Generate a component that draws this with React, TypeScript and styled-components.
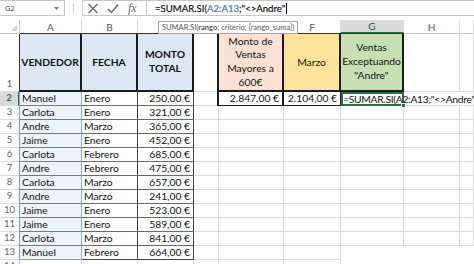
import styled, { createGlobalStyle } from "styled-components";

const GlobalStyle = createGlobalStyle`
  body {
    margin: 0;
    background: #fff;
    font-family: Lato, "Liberation Sans", sans-serif;
  }
`;

const GRID = "#dadada";
const INK = "#1c1c1c";
const REF = "#6d9eeb";
const ACTIVE = "#217346";

const Page = styled.div`
  position: relative;
  width: 474px;
  height: 264px;
  overflow: hidden;
  background: #fff;
`;

const FormulaBar = styled.div`
  display: flex;
  align-items: flex-start;
  height: 20px;
`;

const NameBox = styled.div`
  box-sizing: border-box;
  width: 65px;
  height: 16px;
  border: 1px solid #c6c6c6;
  border-left: none;
  display: flex;
  align-items: center;
  justify-content: space-between;
  padding: 0 5px 0 5px;
  font-family: "Open Sans", sans-serif;
  font-size: 7.5px;
  color: #333;
`;

const Grip = styled.div`
  width: 17px;
  height: 16px;
  display: flex;
  align-items: center;
  justify-content: center;

  &::after {
    content: "";
    height: 9px;
    border-left: 1px dotted #b5b5b5;
  }
`;

const FxBox = styled.div`
  box-sizing: border-box;
  width: 65px;
  height: 16px;
  border: 1px solid #c6c6c6;
  display: flex;
  align-items: center;
  padding-left: 4px;
  gap: 8px;
`;

const FxText = styled.span`
  font-family: "Liberation Serif", serif;
  font-style: italic;
  font-size: 12px;
  color: #666;
  line-height: 12px;
  margin-left: 1px;
`;

const Formula = styled.div`
  box-sizing: border-box;
  flex: 1;
  height: 16px;
  border: 1px solid #c6c6c6;
  border-left: none;
  border-right: none;
  display: flex;
  align-items: center;
  padding-left: 8px;
  font-size: 9.6px;
  color: #111;
  white-space: nowrap;
  -webkit-text-stroke: 0.2px #111;
`;

const RefText = styled.span`
  color: #3c78d8;
  -webkit-text-stroke: 0.2px #3c78d8;
`;

const Caret = styled.span`
  display: inline-block;
  width: 1px;
  height: 11px;
  background: #000;
  margin-left: 1px;
`;

const Hint = styled.div`
  position: absolute;
  left: 158px;
  top: 21px;
  height: 13px;
  box-sizing: border-box;
  border: 1px solid #a6a6a6;
  background: #fff;
  padding: 0 3px;
  font-size: 7.5px;
  line-height: 11px;
  color: #555;
  white-space: nowrap;
  z-index: 2;
`;

const Sheet = styled.div`
  display: grid;
  grid-template-columns: 20px 62px 56px 56px 25px 65px 57px 63px 56px 14px;
  grid-template-rows: 14px 58px repeat(13, 14px);
`;

const Corner = styled.div`
  box-sizing: border-box;
  border-right: 1px solid #c8c8c8;
  border-bottom: 1px solid #c8c8c8;
  position: relative;

  &::after {
    content: "";
    position: absolute;
    right: 2px;
    bottom: 2px;
    border-left: 6px solid transparent;
    border-bottom: 6px solid #d0d0d0;
  }
`;

const ColHead = styled.div<{ $active?: boolean }>`
  box-sizing: border-box;
  display: flex;
  align-items: center;
  justify-content: center;
  background: ${(p) => (p.$active ? "#dadada" : "#fff")};
  border-right: 1px solid ${GRID};
  border-bottom: ${(p) => (p.$active ? `2px solid ${ACTIVE}` : "1px solid #c8c8c8")};
  font-size: 10px;
  color: ${(p) => (p.$active ? "#1f5a38" : "#555")};
`;

const RowHead = styled.div<{ $active?: boolean }>`
  box-sizing: border-box;
  display: flex;
  align-items: flex-end;
  justify-content: center;
  padding-bottom: 1px;
  background: ${(p) => (p.$active ? "#dadada" : "#fff")};
  border-right: ${(p) => (p.$active ? `2px solid ${ACTIVE}` : "1px solid #c8c8c8")};
  border-bottom: 1px solid ${GRID};
  font-size: 9.5px;
  line-height: 12px;
  font-weight: ${(p) => (p.$active ? 700 : 400)};
  color: ${(p) => (p.$active ? ACTIVE : "#666")};
`;

type Align = "left" | "center" | "right";

type CellProps = {
  $fill?: string;
  $align?: Align;
  $bold?: boolean;
  $wrap?: boolean;
  $right?: string;
  $bottom?: string;
  $edge?: string;
  $active?: boolean;
};

const Cell = styled.div<CellProps>`
  box-sizing: border-box;
  position: relative;
  display: flex;
  align-items: center;
  justify-content: ${(p) =>
    p.$align === "right" ? "flex-end" : p.$align === "center" ? "center" : "flex-start"};
  padding: 0 ${(p) => (p.$align === "right" ? "3px" : "2px")};
  background: ${(p) => p.$fill ?? "transparent"};
  border-right: ${(p) => p.$right ?? `1px solid ${GRID}`};
  border-bottom: ${(p) => p.$bottom ?? `1px solid ${GRID}`};
  box-shadow: ${(p) => (p.$active ? `inset 0 0 0 2px ${ACTIVE}` : p.$edge ?? "none")};
  font-size: 10.3px;
  font-weight: ${(p) => (p.$bold ? 700 : 400)};
  line-height: ${(p) => (p.$wrap ? "13.7px" : "13px")};
  text-align: ${(p) => p.$align ?? "left"};
  white-space: ${(p) => (p.$wrap ? "pre-line" : "nowrap")};
  color: #111;

  ${(p) =>
    p.$active &&
    `
    &::before {
      content: "";
      position: absolute;
      right: -2px;
      bottom: -2px;
      width: 3px;
      height: 3px;
      background: ${ACTIVE};
      border: 1px solid #fff;
      z-index: -1;
    }
  `}
`;

// cell in edit mode: the formula spills over H and I
const EditCell = styled(Cell)`
  letter-spacing: -0.3px;
  z-index: 1;
`;

const line = (w: number, c = INK) => `${w}px solid ${c}`;

const BLUE = "#dde8f5";
const PINK = "#fbe2d5";
const YELLOW = "#ffe39a";
const GREEN = "#c6e0b4";
const TINT = "#eef3fb";

const LETTERS = ["A", "B", "C", "D", "E", "F", "G", "H", ""];

const DATA = [
  ["Manuel", "Enero", "250,00 €"],
  ["Carlota", "Enero", "321,00 €"],
  ["Andre", "Marzo", "365,00 €"],
  ["Jaime", "Enero", "452,00 €"],
  ["Carlota", "Febrero", "685,00 €"],
  ["Andre", "Febrero", "475,00 €"],
  ["Carlota", "Marzo", "657,00 €"],
  ["Andre", "Marzo", "241,00 €"],
  ["Jaime", "Enero", "523,00 €"],
  ["Jaime", "Enero", "589,00 €"],
  ["Carlota", "Marzo", "841,00 €"],
  ["Manuel", "Febrero", "664,00 €"],
];

const FORMULA = '=SUMAR.SI(A2:A13;"<>Andre"';

const XIcon = () => (
  <svg width="12" height="11" viewBox="0 0 12 11">
    <path d="M1.5 1 L10.5 10 M10.5 1 L1.5 10" stroke="#666" strokeWidth="1.3" fill="none" />
  </svg>
);

const CheckIcon = () => (
  <svg width="12" height="11" viewBox="0 0 12 11">
    <path d="M1 6 L4.5 9.5 L11 1.5" stroke="#666" strokeWidth="1.5" fill="none" />
  </svg>
);

const DropArrow = () => (
  <svg width="5" height="3" viewBox="0 0 5 3">
    <path d="M0 0 H5 L2.5 3 Z" fill="#777" />
  </svg>
);

const topEdge = "0 -1px 0 #333";

const HeaderRow = () => (
  <>
    <RowHead>1</RowHead>
    <Cell $fill={BLUE} $bold $align="center" $right={line(2)} $bottom={line(2)} $edge={`${topEdge}, -1px 0 0 #333`}>
      VENDEDOR
    </Cell>
    <Cell $fill={BLUE} $bold $align="center" $right={line(2)} $bottom={line(2)} $edge={topEdge}>
      FECHA
    </Cell>
    <Cell $fill={BLUE} $bold $wrap $align="center" $right={line(2)} $bottom={line(2)} $edge={topEdge}>
      {"MONTO\nTOTAL"}
    </Cell>
    <Cell />
    <Cell $fill={PINK} $wrap $align="center" $right={line(2)} $bottom={line(2)} $edge={`${topEdge}, -2px 0 0 ${INK}, -2px -1px 0 #333`}>
      {"Monto de\nVentas\nMayores a\n600€"}
    </Cell>
    <Cell $fill={YELLOW} $align="center" $right={line(2)} $bottom={line(2)} $edge={topEdge}>
      Marzo
    </Cell>
    <Cell $fill={GREEN} $wrap $align="center" $right={line(2)} $bottom={line(2)} $edge={topEdge}>
      {'Ventas\nExceptuando\n"Andre"'}
    </Cell>
    <Cell />
    <Cell />
  </>
);

const DataRow = ({ n, row }: { n: number; row?: string[] }) => {
  const last = n === 13;
  const blankRight = n >= 13;
  const fade = blankRight ? "none" : undefined;
  return (
    <>
      <RowHead $active={n === 2}>{n}</RowHead>
      {row ? (
        <>
          <Cell $fill={TINT} $right={line(1, "#8fb0dc")} $bottom={line(1, last ? REF : "#7a7a7a")} $edge={`-1px 0 0 ${REF}`}>
            {row[0]}
          </Cell>
          <Cell $right={line(1, "#444")} $bottom={line(1, last ? "#444" : "#6a6a6a")}>
            {row[1]}
          </Cell>
          <Cell $align="right" $right={line(1, "#444")} $bottom={line(1, last ? "#444" : "#6a6a6a")}>
            {row[2]}
          </Cell>
        </>
      ) : (
        <>
          <Cell />
          <Cell />
          <Cell />
        </>
      )}
      <Cell />
      {n === 2 ? (
        <>
          <Cell $align="right" $right={line(2)} $bottom={line(1)} $edge={`-2px 0 0 ${INK}`}>
            2.847,00 €
          </Cell>
          <Cell $align="right" $right={line(1)} $bottom={line(1)}>
            2.104,00 €
          </Cell>
          <EditCell $active $right="none" $bottom="none">
            {FORMULA}
          </EditCell>
          <Cell $right="none" />
          <Cell />
        </>
      ) : (
        <>
          <Cell />
          <Cell />
          <Cell $right={fade} $bottom={fade} />
          <Cell $right={fade} $bottom={fade} />
          <Cell $right={fade} $bottom={fade} />
        </>
      )}
    </>
  );
};

export default function App() {
  const rows = Array.from({ length: 13 }, (_, i) => i + 2);
  return (
    <Page>
      <GlobalStyle />
      <FormulaBar>
        <NameBox>
          G2
          <DropArrow />
        </NameBox>
        <Grip />
        <FxBox>
          <XIcon />
          <CheckIcon />
          <FxText>fx</FxText>
        </FxBox>
        <Formula>
          =SUMAR.SI(<RefText>A2:A13</RefText>;"&lt;&gt;Andre"
          <Caret />
        </Formula>
      </FormulaBar>
      <Hint>
        SUMAR.SI(<b>rango</b>; criterio; [rango_suma])
      </Hint>
      <Sheet>
        <Corner />
        {LETTERS.map((l, i) => (
          <ColHead key={i} $active={l === "G"}>
            {l}
          </ColHead>
        ))}
        <HeaderRow />
        {rows.map((n) => (
          <DataRow key={n} n={n} row={DATA[n - 2]} />
        ))}
      </Sheet>
    </Page>
  );
}
